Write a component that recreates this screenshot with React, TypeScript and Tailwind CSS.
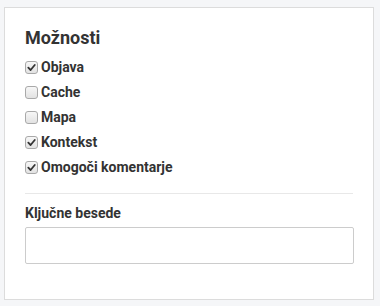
import React from "react";

function Box({ checked }: { checked: boolean }) {
  return (
    <span className="flex h-[13px] w-[13px] shrink-0 items-center justify-center rounded-[3px] border border-[#a9a9a9] bg-[linear-gradient(#f7f7f7,#e2e2e2)]">
      {checked && (
        <svg width="9" height="9" viewBox="0 0 10 10">
          <path d="M1.5 5.2 L4 7.8 L8.6 2.2" fill="none" stroke="#333" strokeWidth="2" strokeLinecap="round" strokeLinejoin="round" />
        </svg>
      )}
    </span>
  );
}

const items: [string, boolean][] = [
  ["Objava", true],
  ["Cache", false],
  ["Mapa", false],
  ["Kontekst", true],
  ["Omogoči komentarje", true],
];

export default function App() {
  return (
    <div className="h-[306px] w-[380px] bg-[#f5f6f8] pl-[4px] pt-[7px]" style={{ fontFamily: "Roboto, 'Liberation Sans', sans-serif" }}>
      <div className="h-[293px] w-[370px] border border-[#dcdcdc] bg-white px-[20px] pt-[19px]">
        <h2 className="text-[18px] font-bold leading-[22px] text-[#333]">Možnosti</h2>
        <div className="mt-[6px] flex flex-col">
          {items.map(([label, c]) => (
            <label key={label} className="flex h-[25px] items-center gap-[3px] text-[14px] font-bold text-[#333]">
              <Box checked={c} />
              <span>{label}</span>
            </label>
          ))}
        </div>
        <div className="mt-[13px] border-t border-[#e8e8e8]" />
        <div className="mt-[11px] text-[14px] font-bold leading-[16px] text-[#333]">Ključne besede</div>
        <input className="mt-[6px] block h-[37px] w-[329px] rounded-[2px] border border-[#cccccc] bg-white outline-none" />
      </div>
    </div>
  );
}
